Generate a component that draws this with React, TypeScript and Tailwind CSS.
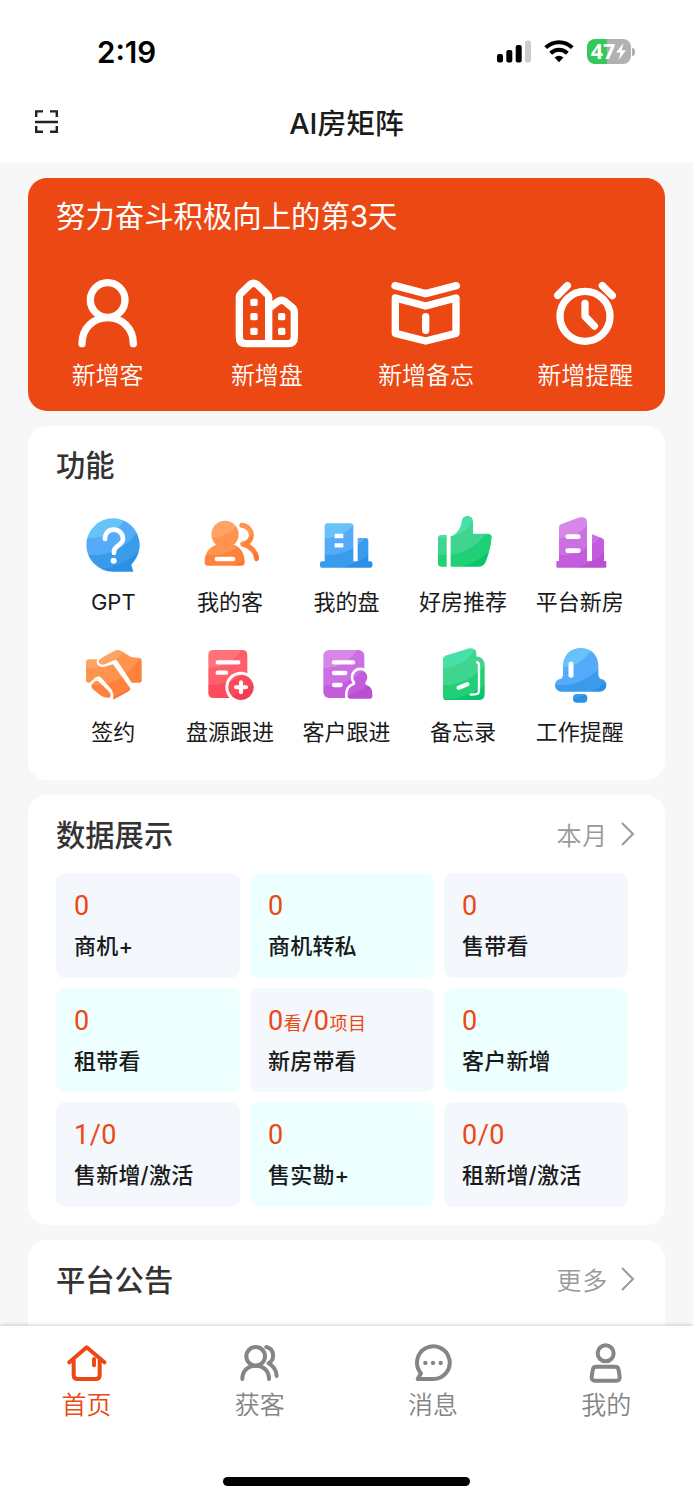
import type { ReactNode } from 'react';

type Tone = 'blue' | 'orange' | 'green' | 'red' | 'purple';

const TONES: Record<Tone, string[]> = {
  blue: ['#66c2f9', '#55abfa', '#389cea', '#2a90e5'],
  orange: ['#ffa366', '#ff944f', '#ff823c', '#ff7331'],
  green: ['#48e0a9', '#3fd58e', '#20d075', '#08c46c'],
  red: ['#ff727c', '#ff5f6a', '#fc4b5b', '#f23f55'],
  purple: ['#d787e8', '#cb6fe2', '#c45ddd', '#bb4fd2'],
};

// Filled icon with the curved colour bands shared by the whole function grid
function BandIcon({ id, tone, children }: { id: string; tone: Tone; children: ReactNode }) {
  const [a, b, c, d] = TONES[tone];
  return (
    <svg viewBox="0 0 180 180" className="h-[60px] w-[60px]" fill={`url(#${id})`}>
      <defs>
        <radialGradient id={id} gradientUnits="userSpaceOnUse" cx="30" cy="-40" r="250">
          <stop offset="0.43" stopColor={a} />
          <stop offset="0.435" stopColor={b} />
          <stop offset="0.64" stopColor={b} />
          <stop offset="0.645" stopColor={c} />
          <stop offset="0.81" stopColor={c} />
          <stop offset="0.815" stopColor={d} />
        </radialGradient>
      </defs>
      {children}
    </svg>
  );
}

const features = [
  {
    label: 'GPT',
    icon: (
      <BandIcon id="gpt" tone="blue">
        <path d="M90 10a80 80 0 0 1 57 136q-3 5 0 11l4 13H90a80 80 0 0 1 0-160z" />
        <path d="M66 72c0-17 11-28 26-28s28 11 28 27c0 20-27 20-27 38v5" fill="none" stroke="#fff" strokeWidth="14" strokeLinecap="round" />
        <circle cx="92" cy="137" r="9" fill="#fff" />
      </BandIcon>
    ),
  },
  {
    label: '我的客',
    icon: (
      <BandIcon id="client" tone="orange">
        <circle cx="75" cy="58" r="41" />
        <path d="M14 140c0-26 14-42 32-50h59c18 9 29 26 29 50q1 12-10 12H24q-11 0-10-12z" />
        <path d="M51 132h48" stroke="#fff" strokeWidth="14" strokeLinecap="round" />
        <path d="M125 31c17 1 29 14 29 30s-10 23-26 26c22 5 40 23 42 44" fill="none" stroke="url(#client)" strokeWidth="15" strokeLinecap="round" strokeLinejoin="round" />
      </BandIcon>
    ),
  },
  {
    label: '我的盘',
    icon: (
      <BandIcon id="estate" tone="blue">
        <path d="M26 145V34q0-9 9-9h68q9 0 9 9v111z" />
        <path d="M125 69h23q9 0 9 9v66h-32z" />
        <rect x="12" y="139" width="157" height="19" rx="6" />
        <path d="M56 63h26M56 91h26" stroke="#fff" strokeWidth="13" />
      </BandIcon>
    ),
  },
  {
    label: '好房推荐',
    icon: (
      <BandIcon id="thumb" tone="green">
        <path d="M25 60h16v95H25q-10 0-10-10V70q0-10 10-10z" />
        <path d="M53 155V64c18-7 31-23 33-44 2-12 8-17 18-17s16 7 16 17v36h46q11 1 10 12c-2 22-8 47-16 68q-6 19-22 19z" />
      </BandIcon>
    ),
  },
  {
    label: '平台新房',
    icon: (
      <BandIcon id="newhouse" tone="purple">
        <path d="M27 140V38q0-7 6-10l52-20q26-5 26 14v118z" />
        <path d="M126 58l31 12q5 2 5 8v61h-36z" />
        <rect x="19" y="138" width="150" height="20" rx="3" />
        <path d="M53 65h32M53 107h32" stroke="#fff" strokeWidth="14" strokeLinecap="round" />
      </BandIcon>
    ),
  },
  {
    label: '签约',
    icon: (
      <BandIcon id="sign" tone="orange">
        <path d="M9 51q0-8 8-8h26c-6 13 4 25 19 23l28-8 52 72c0 6-6 10-14 14l-38 20c4-13 0-25-8-35L56 100c-8-10-18-6-26 4l-10 9q-11 1-11-7z" />
        <path d="M27 118l7-8q8-6 17 3l25 25q12 12 4 20-14 2-26-6l-24-19q-8-7-3-15z" />
        <path d="M48 54c-4-8 4-13 12-18l38-20q8-3 16 1l30 19 24 3q8 1 8 9v58q0 7-8 7h-22l-40-61q-5-9-13-6l-27 12q-10 3-18-4z" />
      </BandIcon>
    ),
  },
  {
    label: '盘源跟进',
    icon: (
      <BandIcon id="houselog" tone="red">
        <rect x="25" y="15" width="117" height="144" rx="14" />
        <path d="M53 52h62M53 83h25" stroke="#fff" strokeWidth="13" strokeLinecap="round" />
        <circle cx="123" cy="127" r="47" fill="#fff" />
        <circle cx="123" cy="127" r="38" />
        <path d="M123 112v30M108 127h30" stroke="#fff" strokeWidth="12" strokeLinecap="round" />
      </BandIcon>
    ),
  },
  {
    label: '客户跟进',
    icon: (
      <BandIcon id="clientlog" tone="purple">
        <rect x="22" y="15" width="123" height="144" rx="17" />
        <path d="M54 52h57M54 84h34M54 120h20" stroke="#fff" strokeWidth="13" strokeLinecap="round" />
        <path
          d="M95 148c0-15 7-23 19-27 5-4 5-8 2-12a21 21 0 1 1 34 0c-3 4-3 8 2 12 12 4 17 12 17 27v5q0 8-8 8h-58q-8 0-8-8z"
          stroke="#fff"
          strokeWidth="16"
          paintOrder="stroke"
        />
      </BandIcon>
    ),
  },
  {
    label: '备忘录',
    icon: (
      <BandIcon id="memo" tone="green">
        <path d="M30 43q0-8 7-11l72-22q20-1 21 15v9q25 3 25 27v86q0 18-18 18H40q-10 0-10-10z" />
        <path d="M130 51q8 1 8 11v74q0 12-12 12l-16 1" fill="none" stroke="#fff" strokeWidth="7" />
        <path d="M77 128l26-10" stroke="#fff" strokeWidth="13" strokeLinecap="round" />
      </BandIcon>
    ),
  },
  {
    label: '工作提醒',
    icon: (
      <BandIcon id="bell" tone="blue">
        <path d="M39 101V62C39 30 62 9 92 9s53 21 53 53v39z" />
        <path d="M39 101l-6 1 6-10h106l6 10-6-1v10H39z" />
        <rect x="15" y="101" width="154" height="39" rx="19.5" />
        <rect x="69" y="147" width="43" height="26" rx="12" />
        <path d="M63 57v34" stroke="#fff" strokeWidth="15" strokeLinecap="round" />
      </BandIcon>
    ),
  },
];

const shortcuts = [
  {
    label: '新增客',
    icon: (
      <>
        <circle cx="119" cy="75" r="52" />
        <path d="M42 206c0-46 34-78 77-78s77 32 77 78" />
      </>
    ),
  },
  {
    label: '新增盘',
    icon: (
      <>
        <path d="M125 206V67q0-6-5-10L91 29q-11-9-22 0L42 55q-5 5-5 11v120q0 20 20 20h125q20 0 20-20v-75q0-8-6-13l-21-18q-12-8-23 0l-27 21" />
        <g fill="#fff" stroke="none">
          <rect x="70" y="71" width="22" height="22" rx="5" />
          <rect x="70" y="114" width="22" height="22" rx="5" />
          <rect x="70" y="158" width="22" height="22" rx="5" />
          <rect x="153" y="114" width="22" height="22" rx="5" />
          <rect x="153" y="158" width="22" height="22" rx="5" />
        </g>
      </>
    ),
  },
  {
    label: '新增备忘',
    icon: (
      <>
        <path d="M27 32l92 24 92-24" />
        <path d="M28 69l91 24 91-24v106l-91 23-91-23z" />
        <path d="M119 125v41" />
      </>
    ),
  },
  {
    label: '新增提醒',
    icon: (
      <>
        <circle cx="120" cy="124" r="75" />
        <path d="M120 85v39l28 29M67 32L38 61M172 32l30 30" />
      </>
    ),
  },
];

const stats: { value: ReactNode; label: string }[] = [
  { value: '0', label: '商机+' },
  { value: '0', label: '商机转私' },
  { value: '0', label: '售带看' },
  { value: '0', label: '租带看' },
  {
    value: (
      <>
        0<span className="text-[18px]">看</span>/0<span className="text-[18px]">项目</span>
      </>
    ),
    label: '新房带看',
  },
  { value: '0', label: '客户新增' },
  { value: '1/0', label: '售新增/激活' },
  { value: '0', label: '售实勘+' },
  { value: '0/0', label: '租新增/激活' },
];

const tabs = [
  {
    label: '首页',
    icon: (
      <>
        <path d="M7 58l52-45 53 45M20 52v44q0 12 12 12h54q12 0 12-12V52" />
        <path d="M81 48v19" />
      </>
    ),
  },
  {
    label: '获客',
    icon: (
      <>
        <circle cx="47" cy="40" r="28" />
        <path d="M7 108c0-25 17-40 40-40s40 15 40 40M79 12c24 5 27 37 7 49 14 8 23 20 24 38" />
      </>
    ),
  },
  {
    label: '消息',
    icon: (
      <>
        <path d="M60 108H14l10-17A49 49 0 1 1 60 108z" />
        <path d="M37 60h.1M60 60h.1M83 60h.1" strokeWidth="13" />
      </>
    ),
  },
  {
    label: '我的',
    icon: (
      <>
        <circle cx="59" cy="31" r="24" />
        <path d="M31 71h56q10 0 11 10l3 21q1 11-10 11H27q-11 0-10-11l3-21q1-10 11-10z" />
      </>
    ),
  },
];

function SectionHead({ title, more }: { title: string; more?: string }) {
  return (
    <div className="flex h-[78px] items-center justify-between pr-[30px] pl-7">
      <h2 className="pt-[3px] text-[29.3px] font-medium text-[#333]">{title}</h2>
      {more && (
        <span className="flex items-center gap-[13px] text-[25px] font-[350] tracking-[0.8px] text-[#999]">
          <span className="pt-[5px]">{more}</span>
          <svg viewBox="0 0 14 24" className="h-6 w-3.5" fill="none" stroke="#999" strokeWidth="2">
            <path d="M1 1l11 11L1 23" />
          </svg>
        </span>
      )}
    </div>
  );
}

export default function App() {
  return (
    <div className="flex h-[1500px] w-[693px] flex-col overflow-hidden bg-[#f7f7f7] font-['Inter','Noto_Sans_CJK_SC',sans-serif]">
      <header className="h-[163px] shrink-0 bg-white">
        <div className="flex h-[82px] items-center justify-between pt-[21px] pr-[58px] pl-[97px]">
          <span className="pt-[2px] text-[29.5px] font-semibold text-black">2:19</span>
          <div className="flex items-center">
            <svg viewBox="0 0 34 23" className="mr-[13px] h-[23px] w-[34px]">
              <rect x="0" y="14" width="6" height="8.5" rx="2" />
              <rect x="9.3" y="10" width="6" height="12.5" rx="2" />
              <rect x="18.7" y="5" width="6" height="17.5" rx="2" />
              <rect x="28" y="0.5" width="6" height="22" rx="2" fill="#ccc" />
            </svg>
            <svg viewBox="0 0 30 23" className="mr-[13px] h-[23px] w-[30px]" fill="none" stroke="#000" strokeWidth="4">
              <path d="M1.7 7.6a19 19 0 0 1 26.6 0" />
              <path d="M6.7 13.2a12 12 0 0 1 16.6 0" />
              <path d="M10.6 17.6a6.4 6.4 0 0 1 8.8 0L15 22.2z" fill="#000" stroke="none" />
            </svg>
            <div className="flex h-[25px] w-[44px] items-center justify-center rounded-[8px] bg-[linear-gradient(to_right,#34c759_46%,#b1b1b1_46%)] text-white">
              <span className="pb-px font-['Open_Sans'] text-[21.5px] leading-none font-bold">47</span>
              <svg viewBox="0 0 12 17" className="h-[17px] w-3" fill="#fff">
                <path d="M8.5 0L1 9.6h4.4L3.6 17 11 7.2H6.8z" />
              </svg>
            </div>
            <span className="ml-[1px] h-2 w-[3px] rounded-r-full bg-[#b1b1b1]" />
          </div>
        </div>
        <div className="grid h-[80px] grid-cols-[1fr_auto_1fr] items-center">
          <svg viewBox="0 0 24 24" className="ml-[35px] h-6 w-6" fill="none" stroke="#222" strokeWidth="2.4">
            <path d="M1.2 7V1.4H8M15 1.4h6.8V7M1.2 16v5.8H8M15 21.8h6.8V16M0 12h23" />
          </svg>
          <h1 className="pt-[3px] text-[28.8px] font-medium text-[#1c1c1c]">AI房矩阵</h1>
        </div>
      </header>

      <main className="flex min-h-0 flex-1 flex-col gap-[15px] overflow-hidden px-7 pt-[15px]">
        <section className="h-[232.5px] shrink-0 rounded-[19px] bg-[#eb4813] text-white">
          <p className="flex h-[76px] items-center px-7 pt-[2px] text-[29.4px]">努力奋斗积极向上的第3天</p>
          <div className="grid grid-cols-4 pt-[21px]">
            {shortcuts.map((s) => (
              <div key={s.label} className="flex flex-col items-center">
                <svg viewBox="0 0 240 240" className="h-20 w-20" fill="none" stroke="#fff" strokeWidth="22" strokeLinecap="round" strokeLinejoin="round">
                  {s.icon}
                </svg>
                <span className="text-[24px] leading-[41px] font-[350]">{s.label}</span>
              </div>
            ))}
          </div>
        </section>

        <section className="h-[354.5px] shrink-0 rounded-[19px] bg-white">
          <SectionHead title="功能" />
          <div className="grid grid-cols-5 gap-y-[31px] px-[27px] pt-[11px]">
            {features.map((f) => (
              <div key={f.label} className="flex flex-col items-center">
                {f.icon}
                <span className="mt-[15px] text-[22px] leading-6 whitespace-nowrap text-[#1a1a1a]">{f.label}</span>
              </div>
            ))}
          </div>
        </section>

        <section className="h-[430px] shrink-0 rounded-[19px] bg-white">
          <SectionHead title="数据展示" more="本月" />
          <div className="grid grid-cols-[repeat(3,184px)] gap-[10px] px-7">
            {stats.map((s, i) => (
              <div key={s.label} className={`h-[104.5px] rounded-[9px] pt-[13px] pl-[18px] ${i % 2 ? 'bg-[#edfffe]' : 'bg-[#f4f7fc]'}`}>
                <div className="h-10 font-['Roboto','Noto_Sans_CJK_SC',sans-serif] text-[27px] leading-[41px] tracking-[0.5px] text-[#eb4813]">
                  {s.value}
                </div>
                <div className="text-[22px] leading-10 font-medium tracking-[0.2px] text-[#1a1a1a]">{s.label}</div>
              </div>
            ))}
          </div>
        </section>

        <section className="h-[140px] shrink-0 rounded-t-[19px] bg-white">
          <SectionHead title="平台公告" more="更多" />
        </section>
      </main>

      <nav className="z-10 flex h-[174px] shrink-0 flex-col items-center bg-white shadow-[0_-1px_4px_rgba(0,0,0,0.18)]">
        <div className="grid w-full flex-1 grid-cols-4 pt-[17px]">
          {tabs.map((t, i) => (
            <div key={t.label} className={`flex flex-col items-center ${i === 0 ? 'text-[#eb4813]' : 'text-[#858585]'}`}>
              <svg viewBox="0 0 120 120" className="h-10 w-10" fill="none" stroke="currentColor" strokeWidth="12" strokeLinecap="round" strokeLinejoin="round">
                {t.icon}
              </svg>
              <span className="text-[25px] leading-[45px] font-[350]">{t.label}</span>
            </div>
          ))}
        </div>
        <div className="mb-[14px] h-[9px] w-[247px] rounded-full bg-black" />
      </nav>
    </div>
  );
}
